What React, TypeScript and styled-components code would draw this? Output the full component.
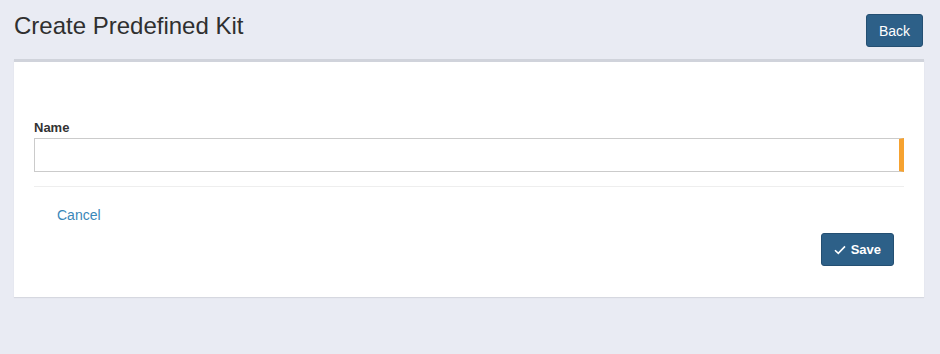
import React from 'react';
import styled, { createGlobalStyle } from 'styled-components';

const GlobalStyle = createGlobalStyle`
  html, body {
    margin: 0;
    padding: 0;
    background: #e9ebf3;
    font-family: "Liberation Sans", Arial, Helvetica, sans-serif;
    color: #333;
  }
`;

const CheckIcon: React.FC = () => (
  <svg width="12" height="10" viewBox="0 0 12 10" aria-hidden="true">
    <path d="M1 5.2 L4.3 8.4 L11 1.4" fill="none" stroke="#fff" strokeWidth="1.6" />
  </svg>
);

const App: React.FC = () => {
  return (
    <Page>
      <GlobalStyle />

      {/* Header */}
      <Header>
        <Title>Create Predefined Kit</Title>
        <PrimaryButton type="button">Back</PrimaryButton>
      </Header>

      {/* Form card */}
      <Card>
        <Field>
          <Label htmlFor="kit-name">Name</Label>
          <Input id="kit-name" type="text" />
        </Field>

        <Divider />

        <Footer>
          <CancelLink href="#">Cancel</CancelLink>
          <SaveRow>
            <PrimaryButton type="button" $small>
              <CheckIcon />
              Save
            </PrimaryButton>
          </SaveRow>
        </Footer>
      </Card>
    </Page>
  );
};

export default App;

const Page = styled.div`
  width: 940px;
  min-height: 354px;
`;

const Header = styled.header`
  display: flex;
  justify-content: space-between;
  align-items: flex-start;
  padding: 14px 17px 12px 14px;
`;

const Title = styled.h1`
  margin: 0;
  font-size: 24px;
  font-weight: normal;
  line-height: 24px;
  color: #2f2f2f;
`;

const PrimaryButton = styled.button<{ $small?: boolean }>`
  display: inline-flex;
  align-items: center;
  justify-content: center;
  gap: 5px;
  height: 33px;
  padding: 0 12px;
  background: #2d6088;
  border: 1px solid #244f72;
  border-radius: 3px;
  color: #fff;
  font-family: "Liberation Sans", Arial, sans-serif;
  font-size: ${({ $small }) => ($small ? '13px' : '14px')};
  font-weight: ${({ $small }) => ($small ? 'bold' : 'normal')};
  cursor: pointer;
`;

const Card = styled.section`
  margin: 0 16px 0 14px;
  background: #fff;
  border-top: 3px solid #d0d3db;
  box-shadow: 0 1px 1px rgba(0, 0, 0, 0.08);
  padding: 58px 20px 31px 20px;
`;

const Field = styled.div`
  display: flex;
  flex-direction: column;
`;

const Label = styled.label`
  font-size: 13px;
  font-weight: bold;
  line-height: 16px;
  margin-bottom: 2px;
  color: #333;
`;

const Input = styled.input`
  box-sizing: border-box;
  height: 34px;
  width: 100%;
  margin: 0;
  border: 1px solid #cbcbcb;
  border-right: 5px solid #f6a230;
  outline: none;
  padding: 6px 10px;
  font-size: 14px;
`;

const Divider = styled.hr`
  margin: 14px 0 0 0;
  border: 0;
  border-top: 1px solid #eeeeee;
`;

const Footer = styled.div`
  display: flex;
  flex-direction: column;
  padding-top: 19px;
`;

const CancelLink = styled.a`
  margin-left: 23px;
  font-size: 14px;
  line-height: 18px;
  color: #3a87b8;
  text-decoration: none;
`;

const SaveRow = styled.div`
  display: flex;
  justify-content: flex-end;
  padding-right: 10px;
  margin-top: 9px;
`;
